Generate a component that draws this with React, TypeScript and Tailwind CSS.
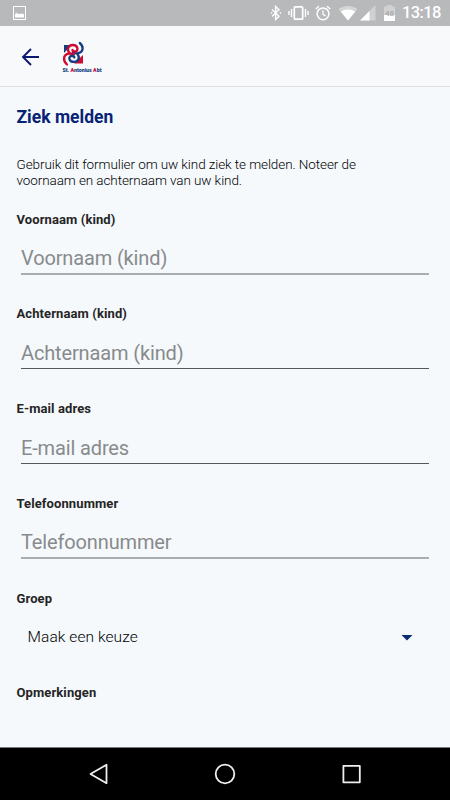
import React from 'react';

const FIELDS = [
  { label: 'Voornaam (kind)', line: 'h-[35px] border-[#a9aeb3] border-b-2' },
  { label: 'Achternaam (kind)', line: 'h-[34.3px] border-[#55585b] border-b' },
  { label: 'E-mail adres', line: 'h-[34.7px] border-[#55585b] border-b' },
  { label: 'Telefoonnummer', line: 'h-[35px] border-[#a9aeb3] border-b-2' },
];

/** Android status bar with notification and system icons */
function StatusBar() {
  return (
    <header className="flex h-[26px] shrink-0 items-center bg-[#b8b9bb] text-white">
      <svg className="ml-[13px] h-[14px] w-[13px]" viewBox="0 0 13 14" aria-label="Screenshot">
        <rect x="0.5" y="0.5" width="12" height="13" fill="none" stroke="currentColor" />
        <path d="M2 11.5V8l2-1.2 1.2 1.4 1.3-.8 1.2.8 1.3-1 2 1.3v3z" fill="currentColor" />
      </svg>
      <div className="ml-auto flex h-full items-center pr-[9px]">
        <svg className="h-4 w-3" viewBox="0 0 12 16" fill="none" stroke="currentColor" strokeWidth="1.4" aria-label="Bluetooth">
          <path d="M2 4.5l7 6.7-3.4 3.3v-13L9 4.8 2 11.5" />
          <path d="M1.6 7.2v1.6M10.4 7.2v1.6" />
        </svg>
        <svg className="ml-1.5 h-4 w-[21px]" viewBox="0 0 21 16" fill="none" stroke="currentColor" aria-label="Vibrate">
          <rect x="6.3" y="1.8" width="8.4" height="12.4" rx="1" strokeWidth="1.7" />
          <path d="M3.5 4v8M17.5 4v8M1 6v4M20 6v4" strokeWidth="1.4" />
        </svg>
        <svg className="ml-1.5 h-4 w-4" viewBox="0 0 16 16" fill="none" stroke="currentColor" aria-label="Alarm">
          <circle cx="8" cy="8.8" r="5.9" strokeWidth="1.5" />
          <path d="M8 5.3v4l2.7 1.7" strokeWidth="1.2" />
          <path d="M0.8 4l3.2-2.7M15.2 4L12 1.3" strokeWidth="1.4" />
        </svg>
        <svg className="ml-[7px] h-4 w-5" viewBox="0 0 20 16" fill="currentColor" aria-label="Wi-Fi">
          <path d="M10 15.5L0.5 4C6 0 14 0 19.5 4z" opacity="0.4" />
          <path d="M10 15.5L2.8 6.8c4.2-3 10.2-3 14.4 0z" />
        </svg>
        <svg className="ml-0.5 h-4 w-4" viewBox="0 0 16 16" fill="currentColor" aria-label="Signal">
          <path d="M0 15.5L15.5 0v15.5z" opacity="0.35" />
          <path d="M0 15.5L9.5 6v9.5z" />
        </svg>
        <svg className="ml-2 h-4 w-[11px]" viewBox="0 0 11 16" aria-label="Battery">
          <path d="M0 1.5h3V0h5v1.5h3V10H0z" fill="#fff" opacity="0.35" />
          <path d="M0 10h11v6H0z" fill="#fff" />
          <text x="5.5" y="11" textAnchor="middle" fontFamily="Roboto, sans-serif" fontSize="8" fontWeight="500" fill="#a5a7a9">48</text>
        </svg>
        <span className="ml-[7px] w-[39px] whitespace-nowrap text-[16.5px] leading-[26px] font-medium tracking-[-0.6px]">13:18</span>
      </div>
    </header>
  );
}

function SchoolLogo() {
  return (
    <svg className="mt-[3px] ml-[21px] h-[34px] w-[41px]" viewBox="0 0 41 34" aria-label="St. Antonius Abt">
      <path d="M2 4h7.5L2 12z" fill="#153e80" />
      <path d="M21 14v8.5h-9z" fill="#d20a32" />
      <g fill="none" strokeLinecap="round" strokeWidth="2.3">
        <path d="M17.8 2c3.8 3.2 3.8 8-.3 9.8-2.3 1-4.5.5-6.500-.3" stroke="#153e80" />
        <path d="M7.3 11.7C4.5 8.5 6.5 4 10.7 4c5.5 0 6.3 6.500 2.100 6.500-1.500 0-2.300-.8-2.300-1.600" stroke="#d20a32" />
        <path d="M5 23.500c-4-3.500-4-9 .4-10.600 2.300-.8 4.500-.3 6.500.5" stroke="#d20a32" />
        <path d="M15.500 13.200c2.800 3.200.800 7.700-3.400 7.700-5.500 0-6.300-6-2.100-6 1.500 0 2.300.8 2.300 1.600" stroke="#153e80" />
      </g>
      <text x="0.5" y="31" textLength="39" lengthAdjust="spacingAndGlyphs" fontFamily="Roboto, sans-serif" fontSize="5.3" fontWeight="900" fill="#153e80">
        St. <tspan fill="#d20a32">A</tspan>ntonius <tspan fill="#d20a32">A</tspan>bt
      </text>
    </svg>
  );
}

function Toolbar() {
  return (
    <div className="flex h-[61px] shrink-0 items-center border-b border-[#dfe1e4] bg-[#f8f9fb]">
      <button className="mt-[2px] ml-[21px]" aria-label="Terug">
        <svg className="h-5 w-5" viewBox="0 0 20 20" fill="none" stroke="#0b1870" strokeWidth="1.9">
          <path d="M18 10H2.5M10 2L2 10l8 8" />
        </svg>
      </button>
      <SchoolLogo />
    </div>
  );
}

function Label({ children }: { children: React.ReactNode }) {
  return <span className="block h-4 text-[13px] leading-4 font-bold tracking-[0.1px] text-[#252525]">{children}</span>;
}

function TextField({ label, line }: { label: string; line: string }) {
  return (
    <label className="block h-[94.75px]">
      <Label>{label}</Label>
      <input
        placeholder={label}
        className={`mt-3 ml-1 block w-[408px] pt-[3px] pl-[0.5px] text-[20px] tracking-[-0.14px] outline-none placeholder:text-[#888a8c] ${line}`}
      />
    </label>
  );
}

function NavigationBar() {
  return (
    <nav className="flex h-[53px] shrink-0 items-center justify-between border-t border-[#77797b] bg-black px-[88px] text-[#eee]">
      <svg className="h-[22px] w-[22px]" viewBox="0 0 22 22" fill="none" stroke="currentColor" strokeWidth="1.8" strokeLinejoin="round" aria-label="Back">
        <path d="M18.5 1.8v18.4L2.5 11z" />
      </svg>
      <svg className="h-[22px] w-[22px]" viewBox="0 0 22 22" fill="none" stroke="currentColor" strokeWidth="1.8" aria-label="Home">
        <circle cx="11" cy="11" r="9.3" />
      </svg>
      <svg className="h-[22px] w-[22px]" viewBox="0 0 22 22" fill="none" stroke="currentColor" strokeWidth="1.8" strokeLinejoin="round" aria-label="Recents">
        <rect x="3.4" y="2.9" width="16.4" height="16.4" />
      </svg>
    </nav>
  );
}

export default function App() {
  return (
    <div className="flex h-[800px] w-[450px] flex-col overflow-hidden bg-[#f5f9fc] font-['Roboto',sans-serif]">
      <StatusBar />
      <Toolbar />
      <main className="flex-1 overflow-hidden px-[16.5px] pt-[18px]">
        <h1 className="h-6 text-[17.5px] leading-6 font-bold text-[#082276]">Ziek melden</h1>
        <p className="mt-[28px] h-[31px] text-[13.5px] leading-[15.5px] font-light tracking-[-0.09px] text-black">
          Gebruik dit formulier om uw kind ziek te melden. Noteer de
          <br />
          voornaam en achternaam van uw kind.
        </p>
        <form className="mt-[23.7px]">
          {FIELDS.map((field) => (
            <TextField key={field.label} {...field} />
          ))}
          <div className="h-[94.75px]">
            <Label>Groep</Label>
            <button type="button" className="mt-[19px] flex h-6 w-full items-center justify-between pr-[21px] pl-[11px] text-[15.5px] font-light tracking-[0.08px] text-black">
              Maak een keuze
              <svg className="h-1.5 w-3" viewBox="0 0 12 6" fill="#0b2c73">
                <path d="M.5 0h11L6 5.5z" />
              </svg>
            </button>
          </div>
          <Label>Opmerkingen</Label>
        </form>
      </main>
      <NavigationBar />
    </div>
  );
}
